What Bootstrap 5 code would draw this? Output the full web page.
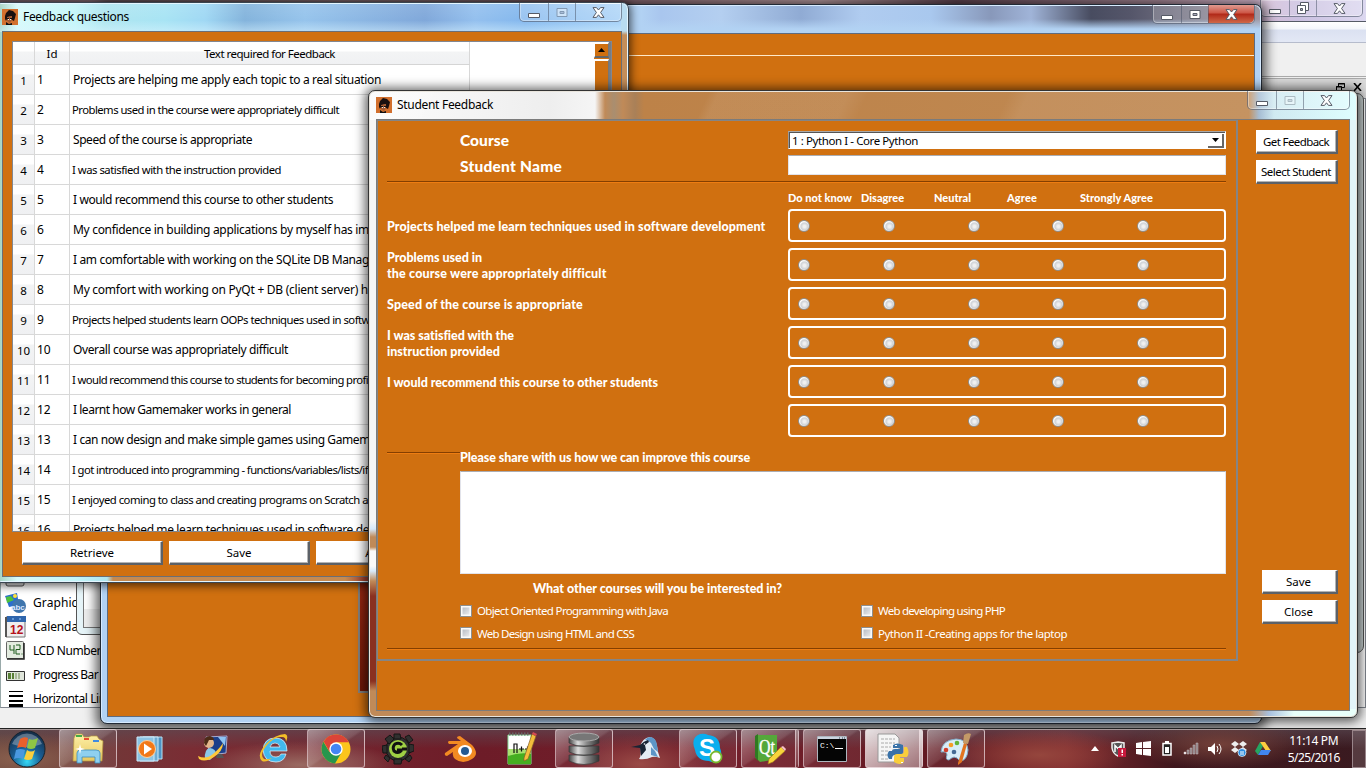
<!DOCTYPE html>
<html lang="en">
<head>
<meta charset="utf-8">
<meta name="viewport" content="width=device-width, initial-scale=1">
<title>Student Feedback</title>
<link href="https://cdn.jsdelivr.net/npm/bootstrap@5.3.0/dist/css/bootstrap.min.css" rel="stylesheet">
<style>
:root{--org:#d07010}
body{width:1366px;height:768px;overflow:hidden;font-family:"Noto Sans",sans-serif;font-size:11.5px;line-height:1.2;color:#000;background:#f0f0f0}
.desk{width:1366px;height:768px}
.win{position:absolute;overflow:hidden}
.fit{display:inline-block;white-space:pre}
svg{display:block;flex:none}
/* designer window behind everything */
.w-base{left:0;top:0;width:1366px;height:728px;background:#f0f0f0}
.glass0{height:22px;background:linear-gradient(90deg,#6f5b62,#9f8188 25%,#83636c 45%,#b79ba0 60%,#5f4450 70%,#a98a99 85%,#d9b9cf 91%,#cac0e0 95%,#dcd8f0);border-bottom:1px solid #555a66}
.menubar0{height:21px;background:linear-gradient(#fff,#f4f6fb 35%,#dbe1f1 40%,#e3e8f5);border-bottom:1px solid #b6bccc}
.toolbar0{height:34px;border-bottom:1px solid #aaa}
.dock0{height:20px;background:#d9d9d9;border-top:1px solid #aaa;margin-top:1px;padding-right:4px}
.dock0 svg{position:static;margin-top:-3px}
.pal{height:610px;border:1px solid #828790;border-left-color:#9aa;background:#fff;overflow:hidden}
.pal .it{height:24px;flex:none;gap:7px;padding-left:4px;font-size:12px}
.pal .it:last-child{margin-bottom:-4px}
/* aero frames */
.w-small{left:76px;top:300px;width:60px;height:335px;background:#e6f4f8;border:1px solid #555;border-radius:6px;padding:6px}
.w-small>div{background:linear-gradient(#fff 0 301px,#eee 301px);border:1px solid #777;height:321px}
.w-side{left:1330px;top:93px;width:34px;height:560px;background:#ccd6d6;border:1px solid #555;border-radius:7px}
.w-main{left:100px;top:4px;width:1162px;height:720px;border:1px solid #222a35;border-radius:7px;box-shadow:0 2px 12px 4px rgba(0,0,0,.65),inset 0 0 0 1px #d7ebff;
 background:linear-gradient(rgba(178,210,243,0) 0 14px,#b2d2f3 24px) 0 0/100% 28px no-repeat,linear-gradient(90deg,transparent 0 540px,#a9c6ee 560px,#b4cff0 620px,#90abd4 700px,#b0ccf0 760px,#a9c8ee 830px,#8898ba 890px,#a0b4d8 930px,#484c60 990px,#55566a 1030px,#a09aa6) 0 0/100% 28px no-repeat,#b2d2f3;padding:28px 6px 6px}
.w-main .client{height:684px;background:var(--org);border:1px solid #5d6b80;padding-top:21px}
.ln{height:1px;background:#ffe9c8}
.redp{width:60px;height:637px;margin-left:250px;border:2px solid #808080;background:linear-gradient(#b03010 0 80%,#9a2810 84%,#701808)}
.w-fq{left:-6px;top:2px;width:635px;height:581px;border:1px solid #3a4550;border-radius:7px;box-shadow:0 1px 8px 2px rgba(0,0,0,.6),inset 0 0 0 1px #e4f6ff;
 background:linear-gradient(90deg,transparent 112px,#c68a50 118px 350px,#a04030 370px) 0 100%/100% 7px no-repeat,linear-gradient(#b8dcf0 0 28px,#c48e5a 32px) 100% 0/7px 100% no-repeat,linear-gradient(180deg,rgba(255,255,255,.1),transparent 60%,rgba(220,245,255,.5)) 0 0/100% 29px no-repeat,linear-gradient(90deg,#98c8b4 0,#d8fafa 22px,#c4f6fa 80px,#b0e6f0 110px,#a8e4f4 170px,#a0d8f4 210px,#84b4dc 250px,#96c4ec 310px,#80a8da 430px,#94c0ee 480px,#84b8ee 530px,#a8d2f8);padding:0 6px 6px 7px}
.w-sf{left:368px;top:90px;width:990px;height:628px;border:1px solid #333;border-radius:7px;box-shadow:0 1px 11px 3px rgba(0,0,0,.62),inset 0 0 0 1px #e9e5dd;
 background:linear-gradient(115deg,rgba(255,255,255,.15) 0 6%,transparent 7% 34%,rgba(255,255,255,.07) 35% 48%,transparent 50% 64%,rgba(255,255,255,.08) 66%) 0 0/100% 29px no-repeat,linear-gradient(90deg,#fcfcfc 0,#eee 180px,#f5f5f5 226px,#c08a58 236px,#a98e70 245px,#c08a58 254px,#a98058 266px,#bd8248 275px,#c08a54 880px,#9fb8d0 890px,#cce8f0 905px,#dcffff) 0 0/100% 29px no-repeat,linear-gradient(90deg,#c08a58 880px,#a8c0de 900px,#e8fffa 925px) 0 100%/100% 8px no-repeat,linear-gradient(#f6f6f6 0 430px,#d5e8fa 438px,#c08a58 446px 456px,#fafafa 460px 475px,#d8eafa 480px,#c08a58 490px,#8a3020 505px 590px,#c08a58 600px) 0 0/8px 100% no-repeat,#e2f4f8;padding:0 7px 6px 7px}
.tbar{height:28px;font-size:12px;gap:5px}
.wb{height:19px;width:103px;border:1px solid rgba(70,80,100,.6);border-top:0;border-radius:0 0 5px 5px;align-self:flex-start;background:rgba(255,255,255,.18);box-shadow:inset 0 0 0 1px rgba(255,255,255,.35)}
.wb>span{display:flex;align-items:center;justify-content:center;border-left:1px solid rgba(70,80,100,.5)}
.wb>span:first-child{border:0}
.b1{width:28px}.b2{width:27px}.b3{flex:1}
.wb .hot{background:linear-gradient(#e09a90,#cc5544 45%,#b02818 50%,#d06848);border-radius:0 0 5px 0}
/* feedback questions */
.w-fq .client{height:546px;background:var(--org);border:1px solid #6b6e75;padding:9px 9px 0 9px}
.tblbox{height:491px;overflow:hidden;border:1px solid #828790;background:#fff}
.tb-main{width:457px}
.hd,.rw{display:grid;grid-template-columns:22px 35px 400px}
.hd{height:23px;font-size:11.5px;background:linear-gradient(#fff 0 9px,#f3f4f5 10px,#f0f1f3);border-bottom:1px solid #d5d5d5;align-items:center;text-align:center}
.hd>span,.rw>span{border-right:1px solid #d8d8d8;height:100%;display:flex;align-items:center;overflow:hidden}
.hd>span{justify-content:center;padding-top:2px}
.rw{height:30px;font-size:12px}
.rw>span{border-bottom:1px solid #d8d8d8;padding:2px 0 0 3px}
.rw>span:nth-child(2){padding-left:2px}
.rw>span:first-child{background:linear-gradient(#fff 0 9px,#f3f4f5 10px,#eff0f2);justify-content:center;padding:2px 0 0;font-size:11.5px}
.rw .sm{font-size:11.3px;margin:-1px 0 0 -1px}
.sb{width:17px;background:var(--org);border-right:2px solid #777c84}
.sb div{border:2px solid #fff;border-width:2px 1px 1px 1px;border-right-color:#777;border-bottom:2px solid #666;height:16px;display:flex;align-items:center;justify-content:center}
.sb .thumb{height:300px;margin-top:1px}
.qb{background:#fff;border:solid;border-width:1px 2px 2px 1px;border-color:#fff #5c6168 #5c6168 #fff;box-shadow:inset -1px -1px #b4b4b4;height:24px;border-radius:0;padding:0;font-size:11.5px;line-height:22px;text-align:center;color:#000}
/* student feedback */
.w-sf .client{height:592px;background:var(--org);border:1px solid #7b7b7b;color:#fff}
.frm{width:861px;height:541px;border:2px solid #858585;border-width:1px 2px 2px 1px;padding:10px 10px 0 9px}
.lab{font-family:Lato,sans-serif;font-weight:900}
.lab13{font-size:12.5px;line-height:16px}
.qrow .lab13{padding-top:2px}
.c1{width:401px;flex:none}
.c2{width:438px;flex:none}
.cmb{height:18px;background:#fff;color:#000;border:1px solid #999;border-top-color:#aaa;border-bottom-color:#fff;border-right-color:#fff;box-shadow:inset 1px 1px #555;padding:1px 1px 0 3px}
.cmb i{width:16px;height:14px;border-right:2px solid #666;border-bottom:2px solid #666;display:flex;align-items:center;justify-content:center}
.inp{background:#fff;border:1px solid #e2e3ea;border-top-color:#abadb3}
.sep{height:2px;border-top:1px solid #853f00;border-bottom:1px solid #ee7d12}
.qrow{height:33px;margin-bottom:6px}
.rbox{height:33px;border:2px solid #fff;border-radius:4px;padding-left:8px;box-shadow:inset 0 0 0 0 #ddd}
.rbox i{width:12px;height:12px;border-radius:50%;border:1px solid #8e8f8f;background:radial-gradient(circle at 55% 55%,#f0f0f0 0 15%,#cfd2d6 45%,#fff 65%);margin-right:72.8px;flex:none}
.ck{width:12px;height:12px;border:1px solid #8e8f8f;background:linear-gradient(135deg,#aeb4be,#f4f4f4);box-shadow:inset 0 0 0 1.5px #fafafa;flex:none}
/* taskbar */
.tk{position:absolute;left:0;top:728px;width:1366px;height:40px;border-top:1px solid #222;box-shadow:inset 0 1px #a89a9a;
 background:radial-gradient(ellipse 90px 26px at 1040px 26px,#95463d,transparent),radial-gradient(ellipse 70px 30px at 640px 35px,#9a4a46,transparent),radial-gradient(ellipse 90px 26px at 20px 30px,#8a604e,transparent),radial-gradient(ellipse 100px 24px at 300px 36px,#9a6a62,transparent),radial-gradient(ellipse 90px 25px at 1220px 15px,#734039,transparent),linear-gradient(rgba(90,75,85,.65),transparent 50%),linear-gradient(90deg,#68443c,#7a2d34 14%,#6d1c28 35%,#731f2b 55%,#5f1820 70%,#80282e 78%,#3e171d 86%,#3a1a20)}
.st{width:58px;padding-left:8px}
.ap{width:62px;padding:0 2px;flex:none}
.ap>div{height:39px;width:58px;display:flex;align-items:center;justify-content:center}
.on{border:1px solid rgba(235,215,220,.65);border-radius:3px;background:linear-gradient(145deg,rgba(255,255,255,.42),rgba(255,255,255,.16) 48%,rgba(255,255,255,.06) 52%)}
.dbl{border-right-width:4px;border-right-style:double}
.lit{background:linear-gradient(145deg,rgba(255,255,255,.85),rgba(255,255,255,.4))}
.tr{width:24px;display:flex;justify-content:center;flex:none}
.clk{width:78px;color:#fff;font-size:12px;line-height:17px;text-align:center}
.sd{width:14px;height:38px;border:1px solid #99858a;background:rgba(255,255,255,.14)}
</style>
</head>
<body>
<svg width="0" height="0" class="position-absolute">
<defs>
<radialGradient id="orb" cx=".5" cy=".85" r=".8"><stop offset="0" stop-color="#35d8f5"/><stop offset=".5" stop-color="#195c92"/><stop offset="1" stop-color="#15304c"/></radialGradient>
<linearGradient id="met" x1="0" x2="1"><stop offset="0" stop-color="#444"/><stop offset=".3" stop-color="#ddd"/><stop offset=".6" stop-color="#888"/><stop offset="1" stop-color="#333"/></linearGradient>
<linearGradient id="fol" x1="0" y1="0" x2="0" y2="1"><stop offset="0" stop-color="#fdf0a8"/><stop offset="1" stop-color="#e8c860"/></linearGradient>
<symbol id="face" viewBox="0 0 16 16"><path fill="#d2702e" d="M0 0h16v16H0z"/><path fill="#181010" d="M3 7 4 4l3-3 4 1 3 3-1 4-1 3-2-1 0-4-4 1-2 4-1-2z"/><path fill="#a05a34" d="M5 8l5-1 0 4-2 3-3-2z"/><path fill="#111" d="M5 9h2v1H5zm3 0h2v1H8zM4 13l3 2 3-1 0 2H4z"/><path fill="#eee" d="M6 10h1v1H6zm2 0h1v1H8z"/></symbol>
<symbol id="mn" viewBox="0 0 14 12"><path d="M1.500 7.500h11v4h-11z" fill="#fff" stroke="#565b66"/></symbol>
<symbol id="mx" viewBox="0 0 12 12"><path d="M1 2.500h10v8H1z" fill="#fff" stroke="#565b66"/><path d="M4 5.500h4v2H4z" fill="#aab" stroke="#565b66"/></symbol>
<symbol id="rs" viewBox="0 0 14 14"><path d="M4.500 1.500h8v8h-8z" fill="#fff" stroke="#565b66"/><path d="M1.500 4.500h8v8h-8z" fill="#fff" stroke="#565b66"/><path d="M4.500 7.500h2v2h-2z" fill="#aab" stroke="#565b66"/></symbol>
<symbol id="cx" viewBox="0 0 13 11"><path d="M1 .6h3.500l2 2.400 2-2.400H12L8.600 5.500l3.400 4.900H8.500l-2-2.600-2 2.600H1l3.400-4.900z" fill="#fff" stroke="#565b66"/></symbol>
</defs></svg>

<div class="desk position-relative">
 <!-- designer window -->
 <section class="win w-base">
  <div class="glass0 d-flex justify-content-end" style="padding-right:3px"><div class="wb d-flex" style="height:17px"><span class="b1"><svg width="14" height="12"><use href="#mn"/></svg></span><span class="b2"><svg width="14" height="14"><use href="#rs"/></svg></span><span class="b3"><svg width="13" height="11"><use href="#cx"/></svg></span></div></div>
  <div class="menubar0"></div><div class="toolbar0"></div>
  <div class="dock0 d-flex justify-content-end align-items-center gap-2"><svg width="9" height="8" viewBox="0 0 9 8" fill="none" stroke="#000"><path d="M2.500 3V.5h6v4H6M2 1h7M.5 3.500h5v4h-5zM0 4h6"/></svg><svg width="9" height="8" viewBox="0 0 9 8" stroke="#000" stroke-width="1.600"><path d="M1 0l7 8M8 0 1 8"/></svg></div>
  <div class="pal d-flex flex-column justify-content-end">
   <div class="it d-flex align-items-center"><svg width="20" height="20"><rect x="1" y="1" width="18" height="16" rx="2" fill="#ddd" stroke="#555"/></svg></div>
   <div class="it d-flex align-items-center"><svg width="21" height="21" viewBox="0 0 21 21"><path d="m0 3 12-3 2 12L4 14z" fill="#2b6ed0"/><path d="m1 4 5-1 3 4-7 3z" fill="#4ec23a"/><circle cx="10" cy="3" r="2" fill="#ffe13b"/><circle cx="14" cy="13" r="7" fill="#3f75ad"/><text x="6" y="17" font-size="8" font-weight="700" fill="#dce8ff" font-family="Liberation Sans">abc</text></svg><span class="fit" data-w="65">Graphics Vi</span></div>
   <div class="it d-flex align-items-center"><svg width="21" height="22" viewBox="0 0 21 22"><path d="M1 1h19v20H1z" fill="#eee" stroke="#777"/><path d="M2 0h19v6H2z" fill="#2f66ad"/><path d="M0 1h2v20H0z" fill="#555"/><path d="M7 3h2m5 0h2" stroke="#9cf"/><text x="5" y="18" font-size="12" font-weight="700" fill="#b5121b" font-family="Liberation Sans">12</text></svg><span class="fit" data-w="65">Calendar W</span></div>
   <div class="it d-flex align-items-center"><svg width="21" height="20" viewBox="0 0 21 20"><rect x="1.500" y=".5" width="17" height="17" rx="1" fill="#e3ebe0" stroke="#666"/><path d="M2 18h17V2" fill="none" stroke="#222" stroke-width="1.500"/><path d="M5 4v5h4M9 4v9M11 4h4v4.500h-4v4.500h4M16.500 13h1" fill="none" stroke="#1d5a1d"/></svg><span class="fit" data-w="69">LCD Number</span></div>
   <div class="it d-flex align-items-center"><svg width="21" height="14" viewBox="0 0 21 14"><path d="M1.500 3.500h18v9h-18z" fill="#dfe5da" stroke="#333"/><path d="M3 5h3v6H3zm4 0h2v6H7z" fill="#587f35"/><path d="M10 5h2v6h-2zm3 0h2v6h-2z" fill="#a8b898"/></svg><span class="fit" data-w="66">Progress Bar</span></div>
   <div class="it d-flex align-items-center"><svg width="21" height="16" viewBox="0 0 21 16"><path d="M4 0h14v1H4zm0 4h14v2H4zm0 5h14v2H4zm0 4h14v3H4z"/></svg><span class="fit" data-w="80">Horizontal Line</span></div>
  </div>
 </section>
 <section class="win w-side"></section>
 <section class="win w-small"><div></div></section>

 <!-- main application window -->
 <section class="win w-main overflow-visible">
  <div class="d-flex justify-content-end" style="margin-top:-28px;height:28px"><div class="wb d-flex"><span class="b1"><svg width="14" height="12"><use href="#mn"/></svg></span><span class="b2"><svg width="12" height="12"><use href="#mx"/></svg></span><span class="b3 hot"><svg width="13" height="11"><use href="#cx"/></svg></span></div></div>
  <div class="client"><div class="ln"></div><div class="redp"></div></div>
 </section>

 <!-- feedback questions -->
 <section class="win w-fq overflow-visible">
  <div class="tbar d-flex align-items-center"><svg width="16" height="16"><use href="#face"/></svg><span class="fit" data-w="107">Feedback questions</span><div class="wb d-flex ms-auto"><span class="b1"><svg width="14" height="12"><use href="#mn"/></svg></span><span class="b2"><svg width="12" height="12" opacity=".45"><use href="#mx"/></svg></span><span class="b3"><svg width="13" height="11"><use href="#cx"/></svg></span></div></div>
  <div class="client">
   <div class="tblbox d-flex justify-content-between">
    <div class="tb-main">
     <div class="hd"><span></span><span>Id</span><span><b class="fit fw-normal" data-w="132">Text required for Feedback</b></span></div>
     <div class="rw"><span>1</span><span>1</span><span><b class="fit fw-normal" data-w="309">Projects are helping me apply each topic to a real situation</b></span></div>
     <div class="rw"><span>2</span><span>2</span><span><b class="fit fw-normal sm" data-w="268">Problems used in the course were appropriately difficult</b></span></div>
     <div class="rw"><span>3</span><span>3</span><span><b class="fit fw-normal" data-w="180">Speed of the course is appropriate</b></span></div>
     <div class="rw"><span>4</span><span>4</span><span><b class="fit fw-normal sm" data-w="210">I was satisfied with the instruction provided</b></span></div>
     <div class="rw"><span>5</span><span>5</span><span><b class="fit fw-normal" data-w="261">I would recommend this course to other students</b></span></div>
     <div class="rw"><span>6</span><span>6</span><span><b class="fit fw-normal" data-w="297">My confidence in building applications by myself has im</b></span></div>
     <div class="rw"><span>7</span><span>7</span><span><b class="fit fw-normal" data-w="297">I am comfortable with working on the SQLite DB Manag</b></span></div>
     <div class="rw"><span>8</span><span>8</span><span><b class="fit fw-normal" data-w="296">My comfort with working on PyQt + DB (client server) h</b></span></div>
     <div class="rw"><span>9</span><span>9</span><span><b class="fit fw-normal sm" data-w="299">Projects helped students learn OOPs techniques used in softw</b></span></div>
     <div class="rw"><span>10</span><span>10</span><span><b class="fit fw-normal" data-w="216">Overall course was appropriately difficult</b></span></div>
     <div class="rw"><span>11</span><span>11</span><span><b class="fit fw-normal sm" data-w="297">I would recommend this course to students for becoming profi</b></span></div>
     <div class="rw"><span>12</span><span>12</span><span><b class="fit fw-normal" data-w="219">I learnt how Gamemaker works in general</b></span></div>
     <div class="rw"><span>13</span><span>13</span><span><b class="fit fw-normal" data-w="298">I can now design and make simple games using Gamem</b></span></div>
     <div class="rw"><span>14</span><span>14</span><span><b class="fit fw-normal sm" data-w="297">I got introduced into programming - functions/variables/lists/if</b></span></div>
     <div class="rw"><span>15</span><span>15</span><span><b class="fit fw-normal sm" data-w="297">I enjoyed coming to class and creating programs on Scratch a</b></span></div>
     <div class="rw"><span>16</span><span>16</span><span><b class="fit fw-normal" data-w="297">Projects helped me learn techniques used in software de</b></span></div>
    </div>
    <div class="sb"><div><svg width="7" height="4"><path d="M0 4 3.500 0 7 4z"/></svg></div><div class="thumb"></div></div>
   </div>
   <div class="d-flex" style="gap:6px;margin:9px 0 0 10px"><div class="qb" style="width:141px">Retrieve</div><div class="qb" style="width:141px">Save</div><div class="qb" style="width:141px;padding-left:6px">Add Row</div></div>
  </div>
 </section>

 <!-- student feedback -->
 <section class="win w-sf overflow-visible">
  <div class="tbar d-flex align-items-center"><svg width="16" height="16"><use href="#face"/></svg><span class="fit" data-w="97">Student Feedback</span><div class="wb d-flex ms-auto"><span class="b1"><svg width="14" height="12"><use href="#mn"/></svg></span><span class="b2"><svg width="12" height="12" opacity=".35"><use href="#mx"/></svg></span><span class="b3"><svg width="13" height="11"><use href="#cx"/></svg></span></div></div>
  <div class="client d-flex">
   <div class="frm">
    <div class="d-flex align-items-center" style="height:18px"><div class="c1 lab" style="padding-left:73px;font-size:15.5px"><span class="fit" data-w="50">Course</span></div><div class="c2 cmb d-flex align-items-center justify-content-between"><span class="fit" data-w="127">1 : Python I - Core Python</span><i><svg width="7" height="4"><path d="M0 0h7L3.500 4z"/></svg></i></div></div>
    <div class="d-flex align-items-center" style="height:20px;margin-top:6px"><div class="c1 lab" style="padding:2px 0 0 73px;font-size:15.5px"><span class="fit" data-w="103">Student Name</span></div><div class="c2 inp h-100"></div></div>
    <div class="sep" style="margin-top:6px"></div>
    <div class="d-flex align-items-center lab" style="height:26px;padding:3px 0 0 401px;font-size:11px"><span style="width:73px"><span class="fit" data-w="65">Do not know</span></span><span style="width:73px"><span class="fit" data-w="44">Disagree</span></span><span style="width:73px"><span class="fit" data-w="38">Neutral</span></span><span style="width:73px"><span class="fit" data-w="31">Agree</span></span><span class="fit" data-w="74">Strongly Agree</span></div>
    <div class="qrow d-flex align-items-center"><div class="c1 lab lab13"><span class="fit" data-w="379">Projects helped me learn techniques used in software development</span></div><div class="c2 rbox d-flex align-items-center"><i></i><i></i><i></i><i></i><i></i></div></div>
    <div class="qrow d-flex align-items-center"><div class="c1 lab lab13"><span class="fit" data-w="96">Problems used in</span><br><span class="fit" data-w="220">the course were appropriately difficult</span></div><div class="c2 rbox d-flex align-items-center"><i></i><i></i><i></i><i></i><i></i></div></div>
    <div class="qrow d-flex align-items-center"><div class="c1 lab lab13"><span class="fit" data-w="197">Speed of the course is appropriate</span></div><div class="c2 rbox d-flex align-items-center"><i></i><i></i><i></i><i></i><i></i></div></div>
    <div class="qrow d-flex align-items-center"><div class="c1 lab lab13"><span class="fit" data-w="128">I was satisfied with the</span><br><span class="fit" data-w="114">instruction provided</span></div><div class="c2 rbox d-flex align-items-center"><i></i><i></i><i></i><i></i><i></i></div></div>
    <div class="qrow d-flex align-items-center"><div class="c1 lab lab13"><span class="fit" data-w="272">I would recommend this course to other students</span></div><div class="c2 rbox d-flex align-items-center"><i></i><i></i><i></i><i></i><i></i></div></div>
    <div class="qrow d-flex align-items-center"><div class="c1"></div><div class="c2 rbox d-flex align-items-center"><i></i><i></i><i></i><i></i><i></i></div></div>
    <div class="d-flex" style="height:28px"><div class="sep" style="width:73px;margin-top:9px"></div><div class="lab lab13" style="padding-top:7px"><span class="fit" data-w="291">Please share with us how we can improve this course</span></div></div>
    <div class="inp" style="height:103px;margin-left:73px"></div>
    <div class="lab lab13" style="height:26px;padding:7px 0 0 146px"><span class="fit" data-w="250">What other courses will you be interested in?</span></div>
    <div class="d-flex align-items-center" style="height:22px;padding-left:73px"><div class="d-flex align-items-center" style="width:401px;gap:5px"><span class="ck"></span><span class="fit" data-w="192">Object Oriented Programming with Java</span></div><div class="d-flex align-items-center" style="gap:5px"><span class="ck"></span><span class="fit" data-w="128">Web developing using PHP</span></div></div>
    <div class="d-flex align-items-center" style="height:23px;padding-left:73px"><div class="d-flex align-items-center" style="width:401px;gap:5px"><span class="ck"></span><span class="fit" data-w="158">Web Design using HTML and CSS</span></div><div class="d-flex align-items-center" style="gap:5px"><span class="ck"></span><span class="fit" data-w="190">Python II -Creating apps for the laptop</span></div></div>
    <div class="sep" style="margin-top:3px"></div>
   </div>
   <div class="d-flex flex-column align-items-end" style="width:100px;padding-top:10px;gap:6px"><div class="qb" style="width:82px;padding-right:1px"><span class="fit" data-w="67">Get Feedback</span></div><div class="qb" style="width:82px;padding-right:1px"><span class="fit" data-w="71">Select Student</span></div><div class="qb" style="width:76px;margin-top:380px;padding-right:2px">Save</div><div class="qb" style="width:76px;padding-right:2px">Close</div></div>
  </div>
 </section>

 <!-- taskbar -->
 <footer class="tk d-flex align-items-center">
  <div class="st"><svg width="38" height="38" viewBox="0 0 38 38"><circle cx="19" cy="19" r="18" fill="url(#orb)" stroke="#16232e"/><path d="M4 14a16 16 0 0 1 30 0q-15 6-30 0z" fill="#fff" opacity=".3"/><path d="M12 9q4-3 8-1l-2 10q-4-2-9 0z" fill="#e8602c"/><path d="M21 9q4 2 9-1l-3 10q-4 2-8 0z" fill="#8fc644"/><path d="M8 20q4-2 9 0l-2 9q-4-2-9 0z" fill="#4a98e0"/><path d="M19 20q4 3 8 0l-3 9q-4 2-8 0z" fill="#fbce3d"/></svg></div>
  <div class="ap"><div class="on"><svg width="34" height="32" viewBox="0 0 34 32"><path d="M3 5 5 1h6l2 3h5l2-1h6l2 3 4 2-1 20H2z" fill="url(#fol)" stroke="#b99a3c" stroke-width=".7"/><path d="M5 2h6v2H5z" fill="#44ab48"/><path d="M13 5h5v2h-5z" fill="#e64b32"/><path d="M22 7h6v2h-6z" fill="#3f8be0"/><path d="M6 20q0-3 4-3h15q4 0 4 3v10h-5v-6H11v6H6z" fill="#8fd0f0" stroke="#3d8ebd" stroke-width=".8"/><path d="m9 11 1 4 4 1-4 1-1 4-1-4-4-1 4-1z" fill="#fff"/></svg></div></div>
  <div class="ap"><div><svg width="28" height="28" viewBox="0 0 28 28"><path d="M7 2h19v22H7z" fill="#4c94c4" stroke="#b7e1f3"/><path d="M4 2h18v24H4z" fill="#6dadd5" stroke="#cdeafa"/><path d="M1 2h17v24H1z" fill="#8cc4e4" stroke="#cdeafa"/><circle cx="11" cy="14" r="8.500" fill="#f27818" stroke="#fbd0a0"/><path d="m8 8.500 8 5.500-8 5.500z" fill="#fff"/></svg></div></div>
  <div class="ap"><div><svg width="32" height="28" viewBox="0 0 32 28"><path d="m10 2 21-1-1 17-16 2z" fill="#1c3f8a" stroke="#aac"/><path d="m22 2 8 0-1 9z" fill="#8ec3f2"/><path d="M21 19h5l2 4h-8z" fill="#555"/><circle cx="13" cy="8" r="5" fill="#e4b78c"/><path d="M8 8q0-7 6-7 4 1 4 4l-5 0-3 6z" fill="#4d2c18"/><path d="M9 24q-1-10 5-11 6 1 6 6l-6 6z" fill="#8bc8e8"/><path d="M2 21q8 4 15-2t10-11q0 8-9 14T3 24z" fill="#ffc83a"/></svg></div></div>
  <div class="ap"><div><svg width="32" height="32" viewBox="0 0 32 32"><path d="M29 18H12q0 6 6 6 4 0 5-3h5q-2 8-10 8Q6 29 5 17 6 5 17 5q12 0 12 13zm-7-4q-1-4-5-4t-5 4z" fill="#42b9ee" stroke="#e1f5ff" stroke-width=".7"/><path d="M4 28Q-2 22 8 11 18 1 27 1q4 1 1 8 0-5-4-5Q17 3 9 12 1 22 6 26q3 1 8-1-6 5-10 3z" fill="#f4bd28"/></svg></div></div>
  <div class="ap"><div class="on"><svg width="30" height="30" viewBox="0 0 30 30"><circle cx="15" cy="15" r="14.500" fill="#fbc51c"/><path d="M2.400 7.800A14.500 14.500 0 0 0 14 29.500l6.500-11L15 15 8.500 18z" fill="#27964d"/><path d="M15 8.300h12.800A14.500 14.500 0 0 0 2.600 7.500L8.700 18z" fill="#db4437"/><circle cx="15" cy="15" r="6.700" fill="#fff"/><circle cx="15" cy="15" r="5.300" fill="#4285f4"/></svg></div></div>
  <div class="ap"><div><svg width="32" height="32" viewBox="0 0 32 32"><g fill="#30302f" stroke="#151515"><circle cx="16" cy="16" r="12"/><path d="m12 1 6 0 1 5h-7zM12 31h7l1-5h-8zM0 13l5-1v8l-4 0zM27 11l5 1v6l-5 2zM3 6l5-4 4 4-5 5zM23 4l4-2 4 5-4 3zM4 22l4 3-2 4-4-4zM23 26l5-4 2 3-3 4z"/></g><circle cx="16" cy="16" r="9" fill="#9fd044"/><path d="M20 12q-3-3-7-1-3 3-1 7 4 3 7 0v-1h-4M20 16h5" stroke="#111" stroke-width="3" fill="none"/></svg></div></div>
  <div class="ap"><div><svg width="32" height="28" viewBox="0 0 32 28"><path d="M1 18 14 9H5q-2-2 0-3h12l-4-3q0-2 3-2l12 9q8 9 0 14-9 6-17 0-3-3-2-7l-6 4q-3 0-2-3z" fill="#f28a22"/><ellipse cx="21" cy="16" rx="7" ry="6" fill="#fff"/><circle cx="21" cy="16" r="4" fill="#245a92"/></svg></div></div>
  <div class="ap"><div><svg width="32" height="34" viewBox="0 0 32 34"><path d="M2 3h23v29H2z" fill="#fff" stroke="#8d9"/><path d="M2 22q11-4 23-2v12H2z" fill="#46ae20"/><path d="M2 17h23v5q-11-2-23 2z" fill="#a8e170"/><path d="M3 2h21" stroke="#666" stroke-dasharray="1.500 1.500" stroke-width="3"/><path d="M8 21v-9h3v9m2-4h5m-2.500-2.500v5M19 17h5m-2.500-2.500v5" fill="none" stroke="#111" stroke-width="1.200"/><path d="m18 26 8-24 4 2-8 23-4 2z" fill="#f4bd3c" stroke="#86602a" stroke-width=".7"/><path d="m26 2 1-2 4 2-1 2z" fill="#d64a50"/></svg></div></div>
  <div class="ap"><div class="on"><svg width="32" height="34" viewBox="0 0 32 34"><g fill="url(#met)" stroke="#3a3a3a" stroke-width=".7"><path d="M1 23v6q15 7 30 0v-6zM1 14v6q15 7 30 0v-6zM1 5v6q15 7 30 0V5z"/></g><ellipse cx="16" cy="5" rx="15" ry="4" fill="#777" stroke="#aaa"/></svg></div></div>
  <div class="ap"><div><svg width="30" height="24" viewBox="0 0 30 24"><path d="M9 10q2-9 10-10 6 1 7 9l1 6 2 6q-5-2-8-1-6 3-13 2 3-4 1-12z" fill="#e4edf4"/><path d="M14 3q2-3 6-3 5 1 6 8l1 7-4-3-3-6q-3-3-6-3z" fill="#5d96c7"/><path d="m20 10 4 4 3 6-7-2z" fill="#5d96c7"/><path d="m0 10 9-2q4-4 8-5l1 2-4 3 1 5-5 6-1-8z" fill="#182434"/><circle cx="13.500" cy="7" r=".8" fill="#fff"/></svg></div></div>
  <div class="ap"><div class="on"><svg width="32" height="32" viewBox="0 0 32 32"><path d="M8 1q5-1 8 1 12 1 12 13 3 7-1 12-4 4-10 1Q5 28 3 17-2 5 8 1z" fill="#0aaeee"/><text x="7" y="23" font-size="24" font-weight="700" fill="#fff" font-family="Liberation Sans">S</text><circle cx="24" cy="24" r="5.500" fill="#fff" stroke="#79b92d" stroke-width="1.800"/></svg></div></div>
  <div class="ap"><div class="on dbl"><svg width="34" height="32" viewBox="0 0 34 32"><path d="M4 2h21v24l-17 3-5-5z" fill="#54a83a"/><path d="M3 3l3-2v27l-3-4z" fill="#2f7a22"/><text x="7" y="21" font-size="20" fill="#fff" stroke="#fff" stroke-width=".4" textLength="16" lengthAdjust="spacingAndGlyphs" font-family="Liberation Serif">Qt</text><path d="m17 26 12-12 4 4-12 11-5 2z" fill="#f7d43b" stroke="#a8781c" stroke-width=".7"/><path d="m29 14 2-1 3 3-1 2z" fill="#f6c0c8"/></svg></div></div>
  <div class="ap"><div class="on"><svg width="30" height="26" viewBox="0 0 30 26"><path d="M.5.5h29v25H.5z" fill="#050505" stroke="#aeb6be"/><path d="M1 1h28v2H1z" fill="#cbd5e0"/><path d="M22 2h1m2 0h1m1 0h1" stroke="#345"/><text x="3" y="12" font-size="8" fill="#fff" font-family="Liberation Mono">C:\</text><path d="M18 12.500h8" stroke="#fff"/></svg></div></div>
  <div class="ap"><div class="on lit dbl"><svg width="32" height="34" viewBox="0 0 32 34"><path d="M1 2h17l4 4v24H1z" fill="#f5f5f5" stroke="#999"/><path d="M4 7h14M4 11h14M4 15h10M4 19h8M4 23h8M4 27h8" stroke="#aaa" stroke-dasharray="3 1"/><path d="M15 22v-3q0-2 3-2h5v-1h-7v-3q4-3 10 0v7q0 3-3 3h-5q-3 0-3 4h-3q-3-4 0-8h3z" fill="#3a72a8"/><path d="M27 15h3q3 6 0 10h-7v1h4v4q-4 4-10 0v-5q0-3 3-3h4q3 0 3-3z" fill="#f9ce3b"/><path d="M18 13h2v1h-2zm6 17h2v1h-2z" fill="#fff"/></svg></div></div>
  <div class="ap"><div class="on"><svg width="32" height="32" viewBox="0 0 32 32"><path d="M1 19Q2 7 16 6q11 0 12 11-1 11-8 11-3-4-6-4-3 1-5 3-4 0-2-5 0-4-6-3z" fill="#d8edf8" stroke="#82adc8"/><circle cx="6" cy="17" r="2.300" fill="#d13f2b"/><circle cx="11" cy="12" r="2.300" fill="#f59d28"/><circle cx="17" cy="10" r="2.300" fill="#63b53b"/><circle cx="14" cy="19" r="2.300" fill="#456b94"/><path d="m18 30 6-20 3 1-5 18-4 3z" fill="#e2741f"/><path d="m23 10 1-8q4-3 7-1l-3 10z" fill="#c49a67"/></svg></div></div>
  <div class="tr" style="margin-left:96px"><svg width="8" height="5"><path d="M0 5 4 0l4 5z" fill="#fff"/></svg></div>
  <div class="tr"><svg width="16" height="16" viewBox="0 0 16 16"><path d="m1 2 6-1 6 1v5q-1 6-6 8-5-2-6-8z" fill="#555" stroke="#eee" stroke-width="1.500"/><path d="M4 11V4.500l3 3 3-3V8" stroke="#fff" stroke-width="1.500" fill="none"/><path d="M7 7h8v9H7z" fill="#c8193c"/><path d="M10.500 8.500h1.500v3.500h-1.500zm0 4.500h1.500v1.500h-1.500z" fill="#fff"/></svg></div>
  <div class="tr"><svg width="15" height="15" viewBox="0 0 15 15" fill="#fff"><path d="m0 2 6-1v6H0zm7-1 8-1v7H7zM0 8h6v6l-6-1zm7 0h8v7l-8-1z"/></svg></div>
  <div class="tr"><svg width="10" height="15" viewBox="0 0 10 15"><path d="M1 2.500h8v11.500H1z" fill="#222" stroke="#fff" stroke-width="1.500"/><path d="M3 0h4v2H3zM3 6h4v6H3z" fill="#fff"/></svg></div>
  <div class="tr"><svg width="16" height="13" viewBox="0 0 16 13" fill="#8b8082" stroke="#c8babc" stroke-width=".5"><path d="M1 10h2v2H1z" fill="#fff"/><path d="M4 8h2v4H4zm3-2h2v6H7zm3-3h2v9h-2zm3-2h2v11h-2z"/></svg></div>
  <div class="tr"><svg width="16" height="14" viewBox="0 0 16 14"><path d="M1 5h3l4-4v12L4 9H1z" fill="#fff"/><path d="M10 4q2 3 0 6m2-8q4 5 0 10" stroke="#fff" fill="none"/></svg></div>
  <div class="tr"><svg width="16" height="16" viewBox="0 0 16 16"><path d="m0 3 4-3 4 3-4 3zm8 0 4-3 4 3-4 3zM0 9l4-3 4 3-4 3zm8 0 4-3 4 3-4 3z" fill="#eee"/><circle cx="11" cy="11.500" r="4" fill="#2a8ce0" stroke="#fff" stroke-width=".7"/><path d="M9 11h4m-4 2h4" stroke="#fff"/></svg></div>
  <div class="tr"><svg width="16" height="15" viewBox="0 0 16 15"><path d="M5 1 0 10l3 4 5-9z" fill="#26a561"/><path d="M5 1h5l6 9h-5z" fill="#fdcc3f"/><path d="m3 14 3-5h10l-3 5z" fill="#4186f0"/></svg></div>
  <div class="clk"><span class="fit" data-w="50">11:14 PM</span><br><span class="fit" data-w="53">5/25/2016</span></div>
  <div class="sd ms-auto"></div>
 </footer>
</div>
<script src="https://cdn.jsdelivr.net/npm/bootstrap@5.3.0/dist/js/bootstrap.bundle.min.js"></script>
<script>
// spread each label over its declared width, side bearings included
document.querySelectorAll('.fit').forEach(function (e) {
  e.style.letterSpacing = ((+e.dataset.w - 1 - e.getBoundingClientRect().width) / e.textContent.length) + 'px';
});
</script>
</body>
</html>
